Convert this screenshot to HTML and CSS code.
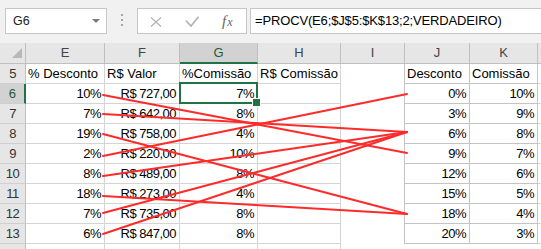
FILE: index.html
```html
<!DOCTYPE html>
<html lang="pt-BR">
<head>
  <meta charset="UTF-8" />
  <title>PROCV - Comissão</title>
  <link rel="stylesheet" href="styles.css">
</head>
<body>
  <div class="app">
    <div class="formula-bar">
      <div class="name-box"><span>G6</span><span class="caret"></span></div>
      <div class="grip"><i></i><i></i><i></i></div>
      <div class="fx-buttons">
        <svg class="btn-x" width="12" height="10" viewBox="0 0 12 10"><path d="M1 0.5 L11 9.5 M11 0.5 L1 9.5" stroke="#b4b4b4" stroke-width="1.3" fill="none"/></svg>
        <svg class="btn-ok" width="14" height="11" viewBox="0 0 14 11"><path d="M0.8 4.5 L6 10 L13.5 0.8" stroke="#b4b4b4" stroke-width="1.8" fill="none"/></svg>
        <span class="fx"><i>f</i><i class="x">x</i></span>
      </div>
      <div class="formula">=PROCV(E6;$J$5:$K$13;2;VERDADEIRO)</div>
    </div>

    <div class="sheet">
      <div class="hd corner"></div>
      <div class="hd">E</div>
      <div class="hd">F</div>
      <div class="hd sel">G</div>
      <div class="hd">H</div>
      <div class="hd">I</div>
      <div class="hd">J</div>
      <div class="hd">K</div>
      <div class="hd"></div>

      <div class="rh">5</div>
      <div class="cell">% Desconto</div>
      <div class="cell">R$ Valor</div>
      <div class="cell">%Comissão</div>
      <div class="cell">R$ Comissão</div>
      <div class="gap"></div>
      <div class="tbl">Desconto</div>
      <div class="tbl">Comissão</div>
      <div class="cell"></div>

      <div class="rh sel">6</div>
      <div class="cell num">10%</div>
      <div class="cell num">R$ 727,00</div>
      <div class="cell num active">7%</div>
      <div class="cell"></div>
      <div class="gap"></div>
      <div class="tbl num">0%</div>
      <div class="tbl num">10%</div>
      <div class="cell"></div>

      <div class="rh">7</div>
      <div class="cell num">7%</div>
      <div class="cell num">R$ 642,00</div>
      <div class="cell num">8%</div>
      <div class="cell"></div>
      <div class="gap"></div>
      <div class="tbl num">3%</div>
      <div class="tbl num">9%</div>
      <div class="cell"></div>

      <div class="rh">8</div>
      <div class="cell num">19%</div>
      <div class="cell num">R$ 758,00</div>
      <div class="cell num">4%</div>
      <div class="cell"></div>
      <div class="gap"></div>
      <div class="tbl num">6%</div>
      <div class="tbl num">8%</div>
      <div class="cell"></div>

      <div class="rh">9</div>
      <div class="cell num">2%</div>
      <div class="cell num">R$ 220,00</div>
      <div class="cell num">10%</div>
      <div class="cell"></div>
      <div class="gap"></div>
      <div class="tbl num">9%</div>
      <div class="tbl num">7%</div>
      <div class="cell"></div>

      <div class="rh">10</div>
      <div class="cell num">8%</div>
      <div class="cell num">R$ 489,00</div>
      <div class="cell num">8%</div>
      <div class="cell"></div>
      <div class="gap"></div>
      <div class="tbl num">12%</div>
      <div class="tbl num">6%</div>
      <div class="cell"></div>

      <div class="rh">11</div>
      <div class="cell num">18%</div>
      <div class="cell num">R$ 273,00</div>
      <div class="cell num">4%</div>
      <div class="cell"></div>
      <div class="gap"></div>
      <div class="tbl num">15%</div>
      <div class="tbl num">5%</div>
      <div class="cell"></div>

      <div class="rh">12</div>
      <div class="cell num">7%</div>
      <div class="cell num">R$ 735,00</div>
      <div class="cell num">8%</div>
      <div class="cell"></div>
      <div class="gap"></div>
      <div class="tbl num">18%</div>
      <div class="tbl num">4%</div>
      <div class="cell"></div>

      <div class="rh">13</div>
      <div class="cell num">6%</div>
      <div class="cell num">R$ 847,00</div>
      <div class="cell num">8%</div>
      <div class="cell"></div>
      <div class="gap"></div>
      <div class="tbl num">20%</div>
      <div class="tbl num">3%</div>
      <div class="cell"></div>

      <!-- row 14: only its top edge is in view -->
      <div class="rh"></div>
      <div class="cell"></div>
      <div class="cell"></div>
      <div class="cell"></div>
      <div class="cell"></div>
      <div class="gap open"></div>
      <div class="tbl open"></div>
      <div class="tbl open"></div>
      <div class="cell"></div>
    </div>

    <!-- lines drawn over the sheet: each E value to the row PROCV falls on -->
    <svg class="links" width="541" height="249" viewBox="0 0 541 249">
      <g stroke="#ff2b2b" stroke-width="2" stroke-linecap="round">
        <line x1="103" y1="95" x2="407" y2="153"/>
        <line x1="103" y1="114" x2="407" y2="132"/>
        <line x1="103" y1="134" x2="407" y2="214"/>
        <line x1="103" y1="156" x2="407" y2="94"/>
        <line x1="103" y1="176" x2="407" y2="132"/>
        <line x1="103" y1="196" x2="407" y2="214"/>
        <line x1="103" y1="213" x2="407" y2="132"/>
        <line x1="103" y1="234" x2="407" y2="132"/>
      </g>
    </svg>
  </div>
</body>
</html>
```

FILE: styles.css
```css
:root {
  --toolbar: #f1f1f1;
  --box-border: #c6c6c6;
  --head: #e6e6e6;
  --head-sel: #d2d2d2;
  --head-line: #bfbfbf;
  --grid: #d4d4d4;
  --table-line: #c4c4c4;
  --green: #217346;
}
* {
  box-sizing: border-box;
}
body {
  margin: 0;
  background: #fff;
  font-family: 'Liberation Sans', Arial, sans-serif;
  color: #000;
  overflow: hidden;
}
.app {
  position: relative;
  width: 541px;
  height: 249px;
  overflow: hidden;
}
.formula-bar {
  height: 43px;
  background: var(--toolbar);
  display: flex;
  align-items: flex-start;
  padding: 8px 0 0 5px;
}
.name-box {
  width: 102px;
  height: 26px;
  background: #fff;
  border: 1px solid var(--box-border);
  display: flex;
  align-items: center;
  justify-content: space-between;
  padding: 0 6px 0 7px;
  font-size: 12.5px;
  color: #222;
}
.caret {
  width: 0;
  height: 0;
  border-left: 4px solid transparent;
  border-right: 4px solid transparent;
  border-top: 4px solid #7a7a7a;
}
.grip {
  width: 30px;
  height: 26px;
  display: flex;
  flex-direction: column;
  align-items: center;
  gap: 3px;
  padding-top: 6px;
}
.grip i {
  width: 2px;
  height: 2px;
  background: #a6a6a6;
}
.fx-buttons {
  width: 110px;
  height: 26px;
  background: #fff;
  border: 1px solid var(--box-border);
  display: flex;
  align-items: center;
  padding-top: 1px;
}
.btn-x {
  margin-left: 12px;
}
.btn-ok {
  margin-left: 23px;
}
.fx {
  margin-left: 23px;
  font-family: 'Liberation Serif', 'Times New Roman', serif;
  color: #666;
  font-size: 15px;
  line-height: 1;
}
.fx .x {
  font-size: 12px;
  margin-left: 1px;
}
.formula {
  flex: 1;
  height: 26px;
  margin-left: 3px;
  background: #fff;
  border: 1px solid var(--box-border);
  border-right: none;
  padding-left: 4px;
  font-size: 13px;
  letter-spacing: -0.15px;
  line-height: 24px;
  white-space: nowrap;
}
.sheet {
  display: grid;
  grid-template-columns: 26px 79px 75px 78px 83px 64px 65px 68px 20px;
  grid-template-rows: 21px repeat(10, 20px);
  font-size: 13px;
}
.hd {
  background: var(--head);
  border-right: 1px solid var(--head-line);
  border-bottom: 1px solid var(--head-line);
  text-align: center;
  color: #444;
  line-height: 20px;
}
.hd.sel {
  background: var(--head-sel);
  color: #1d5b38;
  border-bottom: 2px solid var(--green);
}
.corner {
  position: relative;
}
.corner::after {
  content: '';
  position: absolute;
  right: 3px;
  bottom: 5px;
  border-left: 10px solid transparent;
  border-bottom: 10px solid #b8b8b8;
}
.rh {
  background: var(--head);
  border-right: 1px solid var(--head-line);
  border-bottom: 1px solid #cfcfcf;
  text-align: center;
  color: #333;
  line-height: 19px;
  letter-spacing: -0.5px;
}
.rh.sel {
  background: var(--head-sel);
  color: #1d5b38;
  border-right: 2px solid var(--green);
}
.cell, .tbl, .gap {
  line-height: 19px;
  padding: 0 2px 0 2px;
  white-space: nowrap;
}
.cell {
  border-right: 1px solid var(--grid);
  border-bottom: 1px solid var(--grid);
}
.tbl {
  border-right: 1px solid var(--table-line);
  border-bottom: 1px solid var(--table-line);
}
.gap {
  border-right: 1px solid var(--table-line);
}
.gap.open, .tbl.open {
  border: none;
}
.num {
  text-align: right;
  letter-spacing: -0.5px;
  padding-right: 3px;
}
.active {
  position: relative;
}
.active::before {
  content: '';
  position: absolute;
  top: -2px;
  left: -1px;
  right: -1px;
  bottom: -1px;
  border: 2px solid var(--green);
}
.active::after {
  content: '';
  position: absolute;
  right: -4px;
  bottom: -4px;
  width: 7px;
  height: 7px;
  background: var(--green);
  border: 1px solid #fff;
}
.links {
  position: absolute;
  top: 0;
  left: 0;
  pointer-events: none;
}
```
